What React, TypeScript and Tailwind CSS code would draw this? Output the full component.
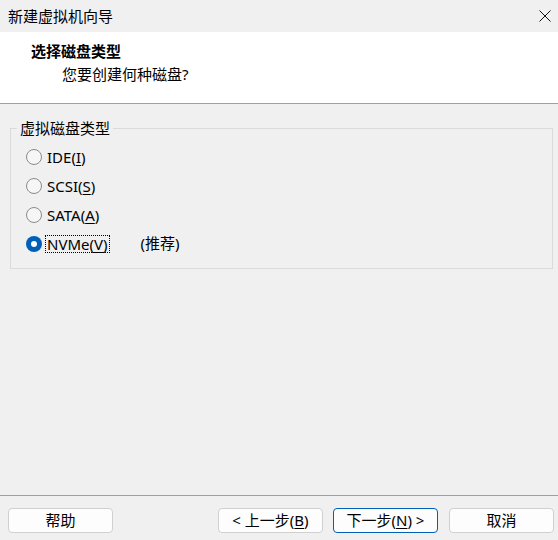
import React from "react";

const font = { fontFamily: '"Noto Sans", "Noto Sans CJK SC", sans-serif' };

function Radio({ checked }: { checked?: boolean }) {
  if (checked) {
    return (
      <span className="flex h-[16px] w-[16px] shrink-0 items-center justify-center rounded-full bg-[#005fb8]">
        <span className="h-[6px] w-[6px] rounded-full bg-white" />
      </span>
    );
  }
  return <span className="h-[16px] w-[16px] shrink-0 rounded-full border border-[#8a8a8a] bg-[#f6f6f6]" />;
}

function Row({
  pre,
  key2,
  post,
  checked,
  extra,
}: {
  pre: string;
  key2: string;
  post: string;
  checked?: boolean;
  extra?: string;
}) {
  return (
    <div className="flex h-[29px] items-center">
      <Radio checked={checked} />
      <span
        className={
          "ml-[3px] border px-[1px] leading-[16px] " +
          (checked ? "border-dotted border-black" : "border-transparent")
        }
      >
        {pre}
        <span className="underline underline-offset-2">{key2}</span>
        {post}
      </span>
      {extra && <span className="ml-[31px]">{extra}</span>}
    </div>
  );
}

function Btn({ children, primary }: { children: React.ReactNode; primary?: boolean }) {
  return (
    <button
      className={
        "flex h-[25px] w-[105px] items-center justify-center rounded-[4px] border bg-[#fdfdfd] text-[15px] leading-none text-black " +
        (primary ? "border-[#005fb8]" : "border-[#d0d0d0]")
      }
    >
      {children}
    </button>
  );
}

export default function App() {
  return (
    <div className="flex h-[540px] w-[558px] flex-col bg-[#f0f0f0] text-[15px] text-black" style={font}>
      {/* title bar */}
      <div className="flex h-[32px] items-center justify-between bg-[#f0f0f0] pl-[8px] pr-[7px]">
        <span className="leading-none">新建虚拟机向导</span>
        <svg width="12" height="12" viewBox="0 0 12 12" className="mr-[0px]">
          <path d="M0.5 0.5 L11.5 11.5 M11.5 0.5 L0.5 11.5" stroke="#111" strokeWidth="1" />
        </svg>
      </div>
      {/* header */}
      <div className="flex h-[71px] flex-col bg-white pl-[31px] pt-[10px]">
        <div className="font-bold leading-[18px]">选择磁盘类型</div>
        <div className="ml-[31px] mt-[5px] leading-[18px]">您要创建何种磁盘?</div>
      </div>
      <div className="h-[1px] bg-[#a0a0a0]" />
      {/* content */}
      <div className="flex-1 px-[5px] pt-[15px]">
        <fieldset className="ml-[5px] mr-[0px] border border-[#dadada] px-0 pb-[10px] pt-0">
          <legend className="ml-[6px] px-[3px] leading-[18px]">虚拟磁盘类型</legend>
          <div className="flex flex-col pl-[15px] pt-[5px]">
            <Row pre="IDE(" key2="I" post=")" />
            <Row pre="SCSI(" key2="S" post=")" />
            <Row pre="SATA(" key2="A" post=")" />
            <Row pre="NVMe(" key2="V" post=")" checked extra="(推荐)" />
          </div>
        </fieldset>
      </div>
      <div className="h-[1px] bg-[#a0a0a0]" />
      {/* footer */}
      <div className="flex h-[44px] items-start pl-[8px] pt-[12px]">
        <Btn>帮助</Btn>
        <div className="ml-[105px]">
          <Btn>
            &lt; 上一步(<span className="underline underline-offset-2">B</span>)
          </Btn>
        </div>
        <div className="ml-[10px]">
          <Btn primary>
            下一步(<span className="underline underline-offset-2">N</span>) &gt;
          </Btn>
        </div>
        <div className="ml-[11px]">
          <Btn>取消</Btn>
        </div>
      </div>
    </div>
  );
}
